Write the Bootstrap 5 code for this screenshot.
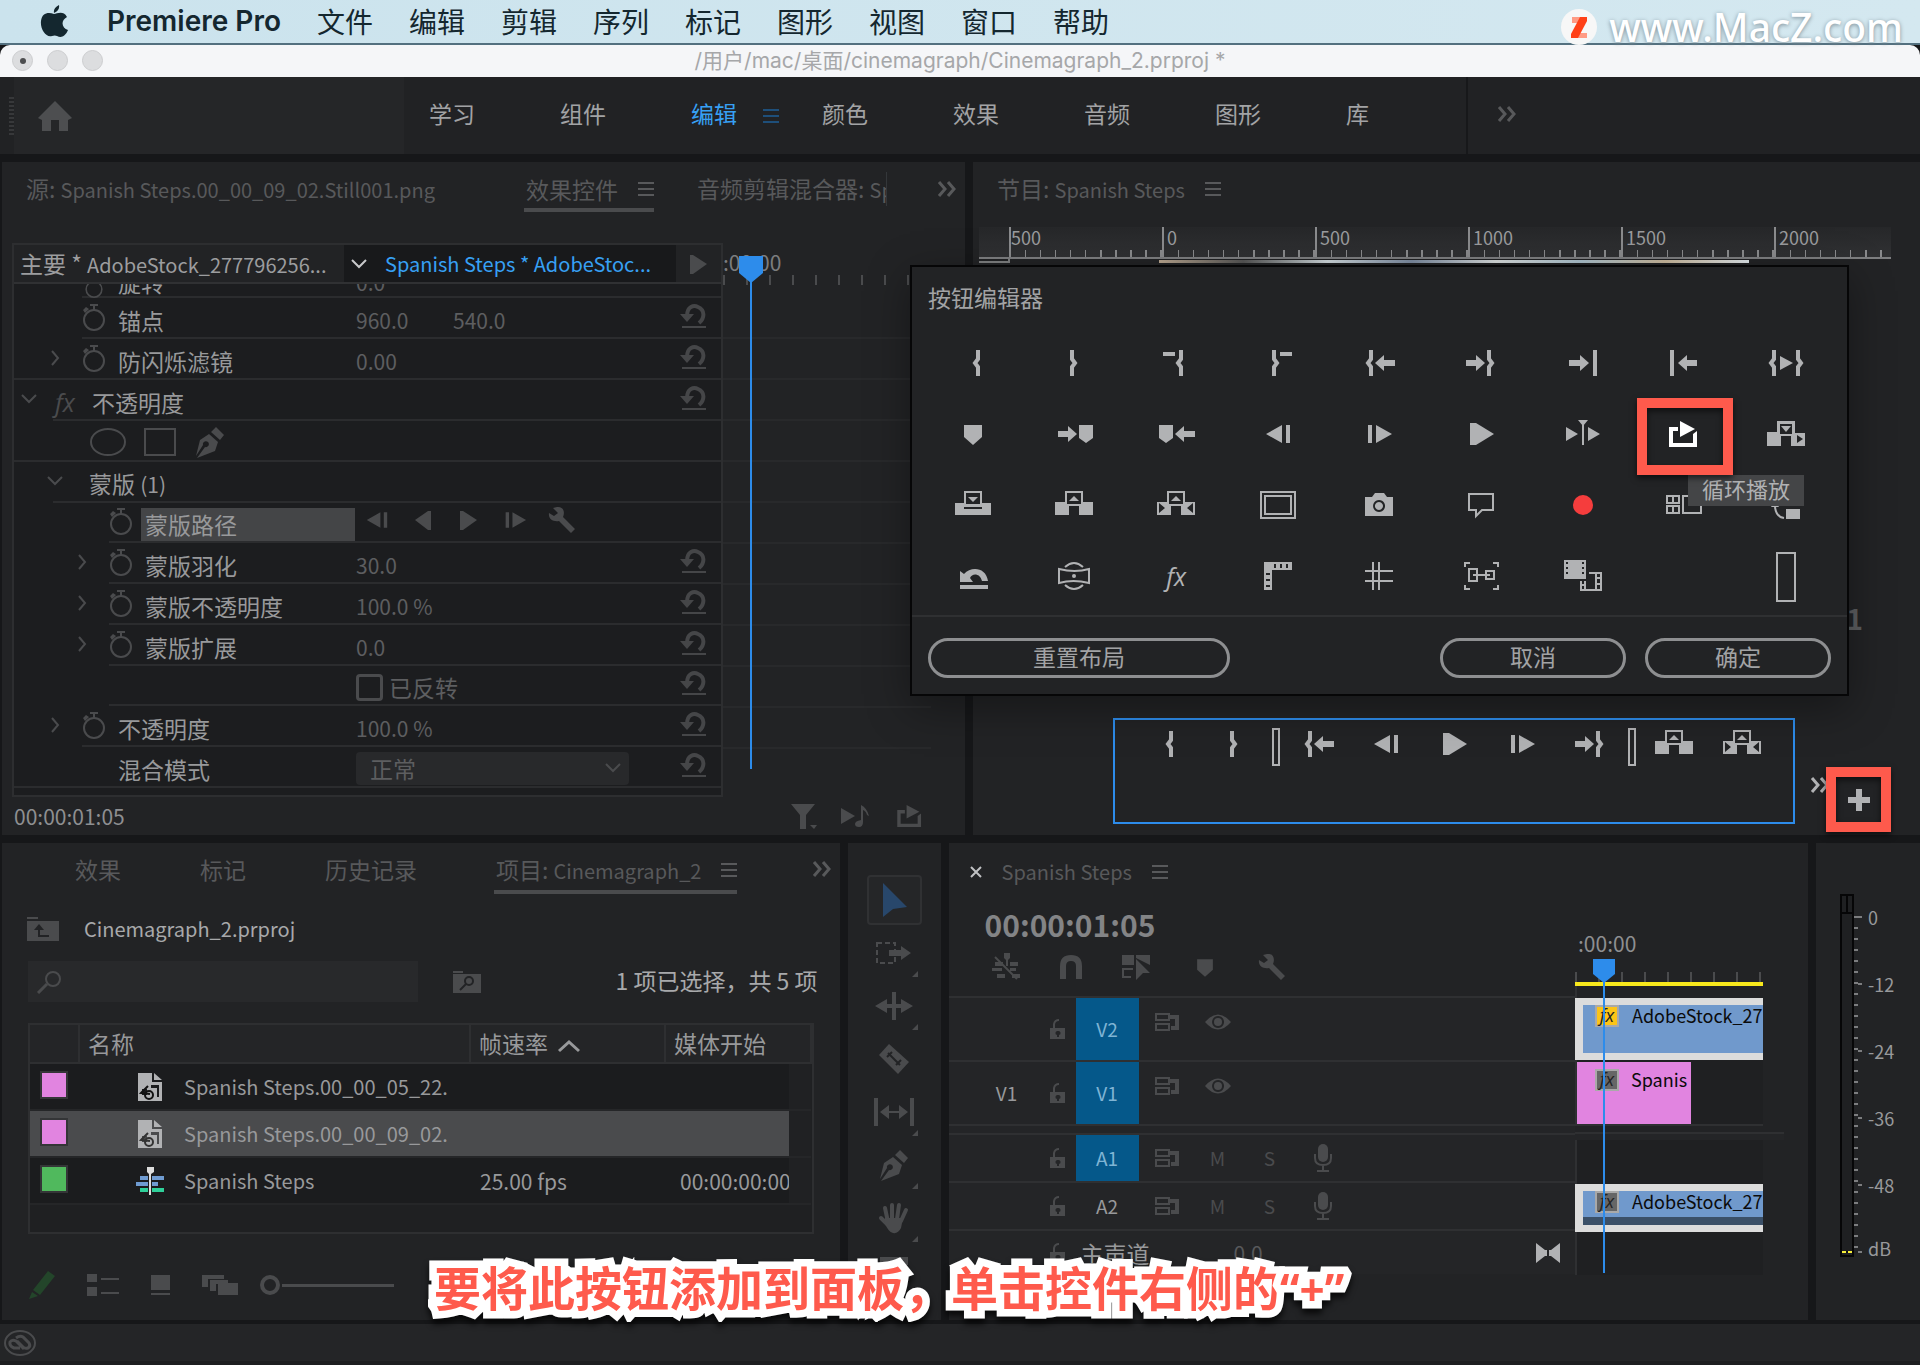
<!DOCTYPE html>
<html lang="zh-CN">
<head>
<meta charset="utf-8">
<meta name="viewport" content="width=device-width, initial-scale=1">
<title>Premiere Pro</title>
<link href="https://cdn.jsdelivr.net/npm/bootstrap@5.3.0/dist/css/bootstrap.min.css" rel="stylesheet">
<style>
:root{--panel:#222325;--gap:#161719;--line:#303133;--dim:#58595b;--mid:#8e8f91;--lit:#aaabad;--ico:#4a4b4d;--blue:#2d8ceb;--alert:#fe5a4c}
body{font-family:"Noto Sans CJK SC",sans-serif;font-size:23px;line-height:32px;background:var(--gap);color:var(--mid);min-height:100vh}
button{background:none;border:0;padding:0;color:inherit;line-height:inherit}
a{color:inherit;text-decoration:none}
svg{display:block;flex:none;fill:currentColor}
.ln{fill:none;stroke:currentColor}
.lat{font-size:20px}
.num{font-size:21px}
.ic{width:40px;height:32px}
.s28{width:28px;height:28px}
.burger{width:16px;height:16px}
.dbl{width:20px;height:20px}
.ic-dim{color:var(--ico)!important}
/* system bar */
.sysbar{height:45px;background:linear-gradient(90deg,#cbe3ed,#d4e8f0);border-bottom:2px solid #53707f;color:#14272f;font-size:28px;padding:0 17px 1px 39px}
.sysbar nav{gap:36px;padding-left:38px}
.appname{font-family:Inter,sans-serif;font-weight:600;font-size:28px}
.brandmark{color:#fff;font-family:"Noto Sans",sans-serif;font-size:39px;line-height:44px;font-weight:500;text-shadow:0 1px 4px #7a8b94;gap:12px;padding-top:12px;z-index:5}
.titlebar{height:32px;background:#f5f6f8;color:#a6a7a9;font-family:Inter,"Noto Sans CJK SC",sans-serif;font-size:21px;border-radius:10px 10px 0 0}
.lights{gap:14px;left:12px;top:5px}
.lights span{width:21px;height:21px;border-radius:50%;background:#dcdddf;border:1px solid #cccdcf}
/* workspace switcher */
.switcher{height:77px;background:#212224;color:#a2a3a5}
.grip{width:5px;height:38px;margin-left:9px;background:repeating-linear-gradient(#37383a 0 2px,transparent 2px 4px)}
.homebox{width:390px;height:77px;background:#252628;padding-left:23px;color:#4d4e50}
.spaces{gap:85px;padding:0 0 6px 25px}
.spaces .active{color:#37a0f4}
.spaces svg{left:72px;top:11px;color:#1e4f7a}
.moretabs{width:454px;border-left:2px solid #17181a;padding:0 0 4px 29px;color:var(--dim)}
/* panels */
.pane{background:var(--panel);min-width:0}
.upper,.lower{margin-top:8px}
.upper{height:673px;padding-left:2px;gap:8px}
.lower{padding-left:2px;gap:8px;min-height:477px}
.f-a{flex:963 1 0}.f-b{flex:947 1 0}.f-c{flex:838 1 0}.f-d{flex:860 1 0}
.tabline{color:var(--dim);height:57px;padding-bottom:4px;white-space:nowrap}
.tabline .on,.ptabs .on{border-bottom:4px solid var(--ico);padding:0 0 3px 2px;gap:20px}
/* effect list */
.fxlist{width:711px;margin-left:10px;border:2px solid #2d2e30;background:#1c1d1f;height:554px}
.fxhead{height:39px;background:#222325;border-bottom:2px solid #303133;color:#9c9d9f;white-space:nowrap}
.fxhead .clipname{width:332px;background:#18191b;color:#37a0f4;padding-left:7px;gap:18px}
.prow{height:41px;padding-top:2px;background:linear-gradient(#2b2c2e,#2b2c2e) no-repeat right bottom/100% 2px;color:#98999b}
.short{height:40px}
.cut{height:14px}
.i2{background-size:calc(100% - 39px) 2px}.i3{background-size:calc(100% - 68px) 2px}.i4{background-size:calc(100% - 95px) 2px}
.nm{width:342px;white-space:nowrap}
.pa{padding-left:7px}.pb{padding-left:33px}.pc{padding-left:60px}
.tw{width:34px;height:16px;color:var(--ico);margin-top:-6px}
.sw{width:37px;color:var(--ico);margin-top:-6px}
.val{color:#5d5e60;font-size:21px}
.reset{margin:-6px 14px 0 auto;color:#454648}
.fxword{font-family:"Open Sans",sans-serif;font-style:italic;font-size:25px}
.picked{background:#444547;height:33px;width:214px;padding-left:4px;margin-left:-4px}
.modesel{appearance:none;width:273px;height:33px;background:#28292b;border:0;border-radius:4px;color:#5d5e60;padding-left:14px;line-height:31px}
.tick{appearance:none;width:27px;height:27px;border:3px solid var(--ico);border-radius:4px;margin-right:6px;background:none}
.fxtime{color:#7c7d7f}
.fxticks{height:10px;margin:0 36px 0 0;background:repeating-linear-gradient(90deg,#4a4b4d 0 2px,transparent 2px 23px)}
.fxlines{height:490px;margin-right:34px;background:repeating-linear-gradient(transparent 0 39px,#28292b 39px 41px)}
.head-line{width:2px;background:var(--blue)}
.playhead{color:var(--blue);width:24px;height:28px}
/* program */
.scale{height:32px;background:linear-gradient(#262729,#303133);border-bottom:2px solid #7e7f81;margin:0 29px 0 6px;overflow:hidden;color:#9a9b9d;font-size:18px;line-height:21px}
.scale div{width:153px;flex:none;border-left:2px solid #8a8b8d;padding-left:3px;background:repeating-linear-gradient(90deg,transparent 0 9%,#8a8b8d 9% 10%) no-repeat left bottom/100% 7px}
.scale div:first-child{width:30px;border:0;background:none}
.scale div:nth-child(2){padding-left:0}
.corner{width:31px;height:4px;margin-left:6px;border:solid #7e7f81;border-width:0 2px 2px 0}
.strip{height:3px;width:590px;margin-left:149px;background:linear-gradient(90deg,#b9a690,#555,#cfd8dc,#7c8ba0,#d8dcdc,#aac0cc,#c8b79c,#dfe6ea)}
.editor{left:-63px;top:103px;width:939px;height:431px;background:#222325;border:2px solid #060607;box-shadow:0 12px 40px rgba(0,0,0,.35);z-index:10;color:#a2a3a5}
.editor h2{font-size:23px;line-height:32px;margin:14px 0 34px 16px;font-weight:400}
.btnset{grid-template-columns:repeat(9,1fr);grid-auto-rows:71px;padding:0 10px;color:#b1b2b4;height:297px}
.btnset button{display:flex;align-items:flex-start;justify-content:center;height:32px}
.acts{border-top:2px solid #2f3032;padding:21px 16px 0;gap:19px;margin-top:-29px}
.pill{border:3px solid #8e8f91;border-radius:20px;height:40px;width:186px;line-height:28px;padding-bottom:4px;color:#a2a3a5}
.wide{width:302px}
.callout{border:10px solid var(--alert);box-shadow:0 3px 6px rgba(0,0,0,.6),inset 0 3px 6px rgba(0,0,0,.6)}
.co1{left:725px;top:131px;width:96px;height:77px}
.hint{left:776px;top:208px;width:116px;height:31px;background:#444547;color:#b0b1b3;font-size:22px;line-height:27px;text-align:center}
.transport{left:140px;right:125px;top:556px;height:106px;border:2px solid var(--blue);padding:8px 0 0 31px;gap:18px;color:#b1b2b4}
.transport div{gap:28px}
.slot{width:8px;height:38px;border:2px solid currentColor;flex:none}
.co2{right:29px;top:605px;width:65px;height:65px;color:#b1b2b4}
/* project */
.ptabs{height:59px;padding-bottom:7px;color:var(--dim);white-space:nowrap}
.finder{width:390px;height:41px;background:#28292b}
.finder input{background:none;border:0;color:var(--lit);width:330px}
.bin{width:786px;height:211px;margin-left:26px;border:2px solid #2e2f31;overflow:hidden;background:#1f2022}
.bin table{table-layout:fixed;width:100%;border-collapse:collapse;color:#98999b}
.bin th{height:38px;font-weight:400;line-height:30px;background:#242527;border-right:2px solid #2e2f31;border-bottom:2px solid #2e2f31;padding:0 0 2px 8px}
.bin td{height:47px;padding:0;white-space:nowrap;overflow:hidden;background:#1b1c1e;border-bottom:2px solid #252628}
.bin .sel td{background:#4a4b4d}
.bin tr td:last-child{background:#202123}
.chip{width:28px;height:28px;border:2px solid #343537;margin-left:10px;margin-top:-4px}
.rose{background:#e184e0}.leaf{background:#50b95d}
.foot{height:80px;color:var(--ico);padding-left:26px}
.zoomer{appearance:none;width:134px;height:20px;background:linear-gradient(var(--ico),var(--ico)) no-repeat right center/112px 3px;margin-left:22px}
.zoomer::-webkit-slider-thumb{appearance:none;width:20px;height:20px;border:4px solid var(--ico);border-radius:50%;background:var(--panel)}
/* tools */
.tools{width:93px;flex:none;padding-top:32px;color:var(--ico)}
.tools button{width:55px;height:50px;margin-bottom:3px;display:flex;align-items:center;justify-content:center;position:relative}
.tools .on{border:2px solid #303133;border-radius:4px;background:#252628;color:#28476b}
.tools .more::after{content:"";position:absolute;right:4px;bottom:1px;border:3px solid;border-color:transparent currentColor currentColor transparent}
/* sequence */
.tcode{font-size:30px;font-weight:700;line-height:36px;color:#838486;margin-left:36px;padding:5px 0 7px}
.track{border-top:2px solid #2f3032;background:#242527;color:#98999b;font-size:19px}
.t64{height:64px}.t48{height:48px}
.src{width:100px;text-align:center;padding-left:16px}
.lock{width:27px}
.tg{width:63px;align-self:stretch}
.tg.on{background:#05588a;color:#7fb4d4}
.opts{color:var(--ico);padding-left:14px}
.opts button{width:52px}
.hi{padding-bottom:14px}
.lane{width:188px;background:#1f2022;border-left:2px solid #2f3032}
.clip{color:#0b0b0b;font-size:18px;line-height:20px;white-space:nowrap;overflow:hidden;gap:12px}
.clip.white{background:#dcdcdc;padding:7px 0 7px 8px}
.clip.white div{background:#7099cc;padding-left:12px;gap:13px}
.badge-fx{width:24px;height:22px;border:2px solid #a9a9a9;background:#666;font:italic 18px/16px "Open Sans",sans-serif;text-align:center;color:#222;flex:none}
.yel{background:#fcc417}
/* meter */
.meter{width:104px;flex:none;padding:51px 0 0 24px;color:#98999b;font-size:18px}
.bar{width:14px;height:363px;border:2px solid #060607;background:#1f2022}
.bar i{display:block;height:18px;border-bottom:2px solid #060607;background:linear-gradient(90deg,transparent 4px,#060607 4px 6px,transparent 6px)}
.bar b{display:block;height:2px;margin-top:337px;background:linear-gradient(90deg,#f6ee3a 4px,#111 4px 6px,#f6ee3a 6px)}
.mt{padding-top:12px}
.mt span{display:block;height:67px;line-height:22px;padding-left:10px;background:linear-gradient(#7c7d7f,#7c7d7f) no-repeat 0 10px/4px 2px}
.mt span:last-child{line-height:14px}
.mtk{width:4px;margin-top:22px;height:338px;background:repeating-linear-gradient(#7c7d7f 0 2px,transparent 2px 11px)}
.status{height:41px;margin-top:4px;background:#242527;border-bottom:4px solid #1d1e20;padding-left:4px;color:var(--ico)}
.caption{left:434px;top:1253px;font-size:47px;line-height:66px;font-weight:700;white-space:nowrap;z-index:20;margin:0;color:var(--alert);-webkit-text-stroke:15px #fff;paint-order:stroke fill;stroke-linejoin:round;filter:drop-shadow(0 5px 3px rgba(0,0,0,.75))}
.caption span{font-family:"Noto Sans",sans-serif;font-size:44px}
</style>
<script src="https://cdn.jsdelivr.net/npm/bootstrap@5.3.0/dist/js/bootstrap.bundle.min.js"></script>
</head>
<body class="d-flex flex-column position-relative">
<svg width="0" height="0" class="position-absolute" aria-hidden="true">
<symbol id="burger" viewBox="0 0 16 16"><path d="M0 1h16v2H0zM0 7h16v2H0zM0 13h16v2H0z"/></symbol>
<symbol id="dbl" viewBox="0 0 20 20"><path class="ln" stroke-width="3" d="M2 3l6 7-6 7M11 3l6 7-6 7"/></symbol>
<symbol id="right" viewBox="0 0 16 16"><path class="ln" stroke-width="2" d="M5 1l6 7-6 7"/></symbol>
<symbol id="down" viewBox="0 0 16 16"><path class="ln" stroke-width="2" d="M1 4l7 7 7-7"/></symbol>
<symbol id="watch" viewBox="0 0 26 28"><circle class="ln" stroke-width="2" cx="13" cy="17" r="10"/><path d="M9 1h8v2h-3v4h-2V3H9zM2 7l3-3 3 2-4 4z"/></symbol>
<symbol id="reset" viewBox="0 0 28 28"><path class="ln" stroke-width="4" d="M8 13C8 3 15 2 19 4C26 7 26 15 20 20"/><path d="M1 11h14l-7 8zM3 23h24v2H3z"/></symbol>
<symbol id="pen" viewBox="0 0 32 32"><path d="M22 1l8 8-4 5-9-8zM15 8l9 8-3 9-18 7 8-11a3 3 0 1 0-2-2L2 30 6 14z"/></symbol>
<symbol id="wrench" viewBox="0 0 28 28"><path d="M5 2L9 1C16 0 17 7 15 11L27 23 23 27 11 15C5 16 0 13 1 7L6 10 10 7z"/></symbol>
<symbol id="in" viewBox="0 0 40 32"><path class="ln" stroke-width="4" d="M25 3V12L22 16L25 20V29"/></symbol>
<symbol id="out" viewBox="0 0 40 32"><path class="ln" stroke-width="4" d="M18 3V12L21 16L18 20V29"/></symbol>
<symbol id="vin" viewBox="0 0 40 32"><path class="ln" stroke-width="4" d="M25 3V12L22 16L25 20V29M7 7H19"/></symbol>
<symbol id="vout" viewBox="0 0 40 32"><path class="ln" stroke-width="4" d="M16 3V12L19 16L16 20V29M22 7H34"/></symbol>
<symbol id="goin" viewBox="0 0 40 32"><path class="ln" stroke-width="4" d="M12 3V12L9 16L12 20V29"/><path d="M16 16l9-8v5h11v6H25v5z"/></symbol>
<symbol id="goout" viewBox="0 0 40 32"><path class="ln" stroke-width="4" d="M28 3V12L31 16L28 20V29"/><path d="M24 16l-9-8v5H5v6h10v5z"/></symbol>
<symbol id="nexted" viewBox="0 0 40 32"><path d="M26 16l-9-8v5H6v6h11v5zM30 3h4v26h-4z"/></symbol>
<symbol id="preved" viewBox="0 0 40 32"><path d="M14 16l9-8v5h10v6H23v5zM6 3h4v26H6z"/></symbol>
<symbol id="inout" viewBox="0 0 40 32"><path class="ln" stroke-width="4" d="M8 3V12L5 16L8 20V29M32 3V12L35 16L32 20V29"/><path d="M14 9l13 7-13 7z"/></symbol>
<symbol id="mark" viewBox="0 0 40 32"><path d="M11 7H29V19L20 27L11 19Z"/></symbol>
<symbol id="nextmk" viewBox="0 0 40 32"><path d="M23 16l-9-8v5H4v6h10v5zM25 7h14v13l-7 5-7-5z"/></symbol>
<symbol id="prevmk" viewBox="0 0 40 32"><path d="M19 16l9-8v5h11v6H28v5zM3 7h14v13l-7 5-7-5z"/></symbol>
<symbol id="back" viewBox="0 0 40 32"><path d="M24 7v18L8 16zM28 7h4v18h-4z"/></symbol>
<symbol id="fwd" viewBox="0 0 40 32"><path d="M17 7v18l16-9zM9 7h4v18H9z"/></symbol>
<symbol id="play" viewBox="0 0 40 32"><path d="M9 5H15L33 16L15 27H9Z"/></symbol>
<symbol id="around" viewBox="0 0 40 32"><path d="M3 9l12 7-12 7zM25 9l12 7-12 7zM19 4h2v23h-2zM15 2h10l-5 6z"/></symbol>
<symbol id="loop" viewBox="0 0 40 32"><path d="M16 3l15 8-15 8zM5 9h9v4H9v12h20v-9l4-3v16H5z"/></symbol>
<symbol id="insert" viewBox="0 0 40 32"><path fill-rule="evenodd" d="M11 3h18v12h10v13H25V18H15v10H1V14h10zM14 6v10h12V6zM31 17v8l6-4z"/><path d="M15 8h10l-5 6z"/></symbol>
<symbol id="over" viewBox="0 0 40 32"><path fill-rule="evenodd" d="M11 2h18v12h9v12H2V14h9zM13 4v11h14V4zM11 18v2h18v-2z"/><path d="M15 8h10l-5 5z"/></symbol>
<symbol id="lift" viewBox="0 0 40 32"><path fill-rule="evenodd" d="M11 2h18v11h10v13H25V17H15v9H1V13h10zM13 4v11h14V4z"/><path d="M15 12h10l-5-5z"/></symbol>
<symbol id="extract" viewBox="0 0 40 32"><path fill-rule="evenodd" d="M11 2h18v11h10v13H25V17H15v9H1V13h10zM13 4v11h14V4zM3 14v10l6-5zM37 14v10l-6-5z"/><path d="M15 12h10l-5-5z"/></symbol>
<symbol id="safe" viewBox="0 0 40 32"><path class="ln" stroke-width="2" d="M3 3h34v26H3zM7 7h26v18H7z"/></symbol>
<symbol id="cam" viewBox="0 0 40 32"><path fill-rule="evenodd" d="M6 8h7l3-4h9l3 4h6v19H6zM20 11a6 6 0 1 0 .1 0zM20 13a4 4 0 1 1-.1 0z"/></symbol>
<symbol id="note" viewBox="0 0 40 32"><path class="ln" stroke-width="2" d="M8 5h24v16H21l-6 6v-6H8z"/></symbol>
<symbol id="rec" viewBox="0 0 40 32"><circle cx="20" cy="16" r="10" fill="#f53d3d"/></symbol>
<symbol id="multi" viewBox="0 0 40 32"><path class="ln" stroke-width="2" d="M3 7h12v7H3zM9 7v7M3 17h12v7H3zM9 17v7M19 7h18v17H19z"/></symbol>
<symbol id="proxy" viewBox="0 0 40 32"><path d="M9 12l4 6H5zM20 20h14v10H20z"/><path class="ln" stroke-width="2" d="M9 16c0 8 3 12 9 13"/></symbol>
<symbol id="undo" viewBox="0 0 40 32"><path d="M7 11l4 3c7-8 22-7 24 7h-6c-2-8-10-8-12-3l3 4H7zM7 25h28v4H7z"/></symbol>
<symbol id="vr" viewBox="0 0 40 32"><path class="ln" stroke-width="2" d="M5 9q16 4 30 0v14q-16-4-30 0zM11 7q9-8 18 0M11 25q9 8 18 0"/><circle cx="20" cy="16" r="2"/></symbol>
<symbol id="rule" viewBox="0 0 40 32"><path fill-rule="evenodd" d="M6 2h28v8H14v20H6zM16 4v4h2V4zM22 4v4h2V4zM28 4v4h2V4zM8 13v2h4v-2zM8 19v2h4v-2zM8 25v2h4v-2z"/></symbol>
<symbol id="guide" viewBox="0 0 40 32"><path class="ln" stroke-width="2" d="M6 11h28M6 21h28M14 2v28M20 2v28"/></symbol>
<symbol id="snap" viewBox="0 0 40 32"><path class="ln" stroke-width="2" d="M4 7V3h5M32 3h5v4M4 25v4h5M32 29h5v-4M8 9h8v12H8zM25 11h8v8h-8zM12 15h17"/></symbol>
<symbol id="film" viewBox="0 0 40 32"><path fill-rule="evenodd" d="M1 0h22v19H1zM3 2v2h2V2zM3 7v2h2V7zM3 12v2h2v-2zM19 2v2h2V2zM19 7v2h2V7zM19 12v2h2v-2z"/><path class="ln" stroke-width="2" d="M26 13h12v17H18v-9M33 13v17M33 18h5M33 24h5M22 21v9M18 25h4"/></symbol>
<symbol id="pback" viewBox="0 0 28 28"><path d="M21 5v19h-3L5 14 18 5z"/></symbol>
<symbol id="pfwd" viewBox="0 0 28 28"><path d="M6 5v19h3L23 14 9 5z"/></symbol>
<symbol id="lockic" viewBox="0 0 18 22"><path fill-rule="evenodd" d="M1 10h3V6q1-5 6-5v2q-4 0-4 4v3h10v11H1zM9 13a2 2 0 0 0-1 4v2h2v-2a2 2 0 0 0-1-4z"/></symbol>
<symbol id="sync" viewBox="0 0 28 20"><path class="ln" stroke-width="2" d="M3 2h13v6H3zM3 12h13v6H3z"/><path d="M17 3h9v15h-8v-4h4V7h-5z"/></symbol>
<symbol id="eye" viewBox="0 0 28 20"><path fill-rule="evenodd" d="M1 10Q14-5 27 10Q14 25 1 10zM14 4a6 6 0 1 0 .1 0z"/><circle cx="14" cy="10" r="4"/></symbol>
<symbol id="mic" viewBox="0 0 20 30"><rect x="5" y="1" width="10" height="18" rx="5"/><path class="ln" stroke-width="2" d="M2 11v4q0 7 8 7t8-7v-4M10 22v6M4 28h12"/></symbol>
</svg>

<header class="sysbar d-flex align-items-center position-relative">
  <svg width="30" height="32" viewBox="0 0 30 32"><path d="M20 0q1 5-5 8Q14 3 20 0zM15 9c3 0 9-4 13 3-7 4-5 11 1 13-3 7-7 8-11 6q-2-1-5 0C7 33 1 24 2 16S9 7 15 9z"/></svg>
  <nav class="d-flex align-items-center" aria-label="菜单">
    <a href="#" class="appname">Premiere Pro</a><a href="#">文件</a><a href="#">编辑</a><a href="#">剪辑</a><a href="#">序列</a><a href="#">标记</a><a href="#">图形</a><a href="#">视图</a><a href="#">窗口</a><a href="#">帮助</a>
  </nav>
  <div class="brandmark d-flex align-items-center ms-auto position-relative"><svg width="36" height="36" viewBox="0 0 36 36"><circle cx="18" cy="18" r="18" fill="#f7f7f7"/><path fill="#ff9b85" d="M11 8h14v6H11zM11 24h15v5H11z"/><path fill="#ff4017" d="M19 8h7v4L17 29h-7v-4z"/></svg><span>www.MacZ.com</span></div>
</header>
<div class="titlebar d-flex align-items-center justify-content-center position-relative">
  <div class="lights d-flex position-absolute"><span class="d-flex align-items-center justify-content-center"><svg width="6" height="6"><circle cx="3" cy="3" r="3" fill="#4d4e50"/></svg></span><span></span><span></span></div>
  <span>/用户/mac/桌面/cinemagraph/Cinemagraph_2.prproj *</span>
</div>
<nav class="switcher d-flex align-items-center" aria-label="工作区">
  <div class="grip"></div>
  <div class="homebox d-flex align-items-center"><a href="#" aria-label="主页"><svg width="36" height="32" viewBox="0 0 36 32"><path d="M18 1L35 18l-4 2v11h-9V20h-8v11H5V20l-4-2z"/></svg></a></div>
  <div class="spaces d-flex"><a href="#">学习</a><a href="#">组件</a><a href="#" class="active position-relative">编辑<svg class="burger position-absolute"><use href="#burger"/></svg></a><a href="#">颜色</a><a href="#">效果</a><a href="#">音频</a><a href="#">图形</a><a href="#">库</a></div>
  <div class="moretabs ms-auto align-self-stretch d-flex align-items-center"><svg class="dbl"><use href="#dbl"/></svg></div>
</nav>

<main class="flex-grow-1 d-flex flex-column">
<div class="upper d-flex">
  <section class="pane f-a">
    <div class="tabline d-flex align-items-center pe-2" style="padding-left:24px">
      <a href="#" style="width:498px">源: <span class="lat">Spanish Steps.00_00_09_02.Still001.png</span></a>
      <a href="#" class="on d-flex align-items-center mt-2">效果控件<svg class="burger"><use href="#burger"/></svg></a>
      <a href="#" class="overflow-hidden border-end border-secondary border-opacity-25" style="width:190px;margin-left:43px">音频剪辑混合器: <span class="lat">Sp</span></a>
      <svg class="dbl ms-auto"><use href="#dbl"/></svg>
    </div>
    <div class="d-flex position-relative" style="margin-top:24px">
      <div class="fxlist flex-shrink-0">
        <div class="fxhead d-flex align-items-center"><span style="width:330px;padding-left:6px">主要 * <span class="lat">AdobeStock_277796256...</span></span><div class="clipname d-flex align-items-center align-self-stretch"><svg width="16" height="16" style="color:#c8c9cb"><use href="#down"/></svg><span class="lat">Spanish Steps * AdobeStoc...</span></div><svg class="s28 ic-dim ms-2"><use href="#pfwd"/></svg></div>
        <div class="prow cut i3 d-flex align-items-end overflow-hidden pt-0"><div class="nm pb d-flex align-items-end"><span class="tw"></span><span class="sw"><svg width="26" height="22" viewBox="0 0 26 28"><use href="#watch"/></svg></span><span>旋转</span></div><span class="val">0.0</span></div>
        <div class="prow i3 d-flex align-items-center"><div class="nm pb d-flex align-items-center"><span class="tw"></span><span class="sw"><svg width="26" height="28"><use href="#watch"/></svg></span>锚点</div><span class="val" style="width:97px">960.0</span><span class="val">540.0</span><button class="reset" aria-label="重置"><svg class="s28"><use href="#reset"/></svg></button></div>
        <div class="prow d-flex align-items-center"><div class="nm pb d-flex align-items-center"><span class="tw"><svg width="16" height="16"><use href="#right"/></svg></span><span class="sw"><svg width="26" height="28"><use href="#watch"/></svg></span>防闪烁滤镜</div><span class="val">0.00</span><button class="reset" aria-label="重置"><svg class="s28"><use href="#reset"/></svg></button></div>
        <div class="prow i2 d-flex align-items-center"><div class="nm pa d-flex align-items-center"><span class="tw"><svg width="16" height="16"><use href="#down"/></svg></span><span class="sw fxword mt-0">fx</span>不透明度</div><button class="reset" aria-label="重置"><svg class="s28"><use href="#reset"/></svg></button></div>
        <div class="prow d-flex align-items-center ic-dim pt-0" style="padding-left:76px;gap:18px"><svg width="36" height="28"><ellipse class="ln" stroke-width="2" cx="18" cy="14" rx="17" ry="13"/></svg><svg width="32" height="28"><path class="ln" stroke-width="2" d="M1 1h30v26H1z"/></svg><svg width="32" height="32"><use href="#pen"/></svg></div>
        <div class="prow i2 d-flex align-items-center"><div class="nm pb d-flex align-items-center"><span class="tw"><svg width="16" height="16"><use href="#down"/></svg></span><span class="ps-2">蒙版 <span class="num">(1)</span></span></div></div>
        <div class="prow short i4 d-flex align-items-center"><div class="nm pc d-flex align-items-center"><span class="tw"></span><span class="sw"><svg width="26" height="28"><use href="#watch"/></svg></span><span class="picked">蒙版路径</span></div><div class="d-flex align-items-center ic-dim ps-1" style="gap:16px;margin-top:-8px"><svg width="34" height="28" viewBox="0 0 40 32"><use href="#back"/></svg><svg class="s28"><use href="#pback"/></svg><svg class="s28"><use href="#pfwd"/></svg><svg width="34" height="28" viewBox="0 0 40 32"><use href="#fwd"/></svg><svg class="s28"><use href="#wrench"/></svg></div></div>
        <div class="prow i4 d-flex align-items-center"><div class="nm pc d-flex align-items-center"><span class="tw"><svg width="16" height="16"><use href="#right"/></svg></span><span class="sw"><svg width="26" height="28"><use href="#watch"/></svg></span>蒙版羽化</div><span class="val">30.0</span><button class="reset" aria-label="重置"><svg class="s28"><use href="#reset"/></svg></button></div>
        <div class="prow i4 d-flex align-items-center"><div class="nm pc d-flex align-items-center"><span class="tw"><svg width="16" height="16"><use href="#right"/></svg></span><span class="sw"><svg width="26" height="28"><use href="#watch"/></svg></span>蒙版不透明度</div><span class="val">100.0 %</span><button class="reset" aria-label="重置"><svg class="s28"><use href="#reset"/></svg></button></div>
        <div class="prow i4 d-flex align-items-center"><div class="nm pc d-flex align-items-center"><span class="tw"><svg width="16" height="16"><use href="#right"/></svg></span><span class="sw"><svg width="26" height="28"><use href="#watch"/></svg></span>蒙版扩展</div><span class="val">0.0</span><button class="reset" aria-label="重置"><svg class="s28"><use href="#reset"/></svg></button></div>
        <div class="prow short i4 d-flex align-items-center"><div class="nm"></div><input class="tick" type="checkbox" id="inv"><label for="inv" class="val" style="font-size:23px">已反转</label><button class="reset" aria-label="重置"><svg class="s28"><use href="#reset"/></svg></button></div>
        <div class="prow i3 d-flex align-items-center"><div class="nm pb d-flex align-items-center"><span class="tw"><svg width="16" height="16"><use href="#right"/></svg></span><span class="sw"><svg width="26" height="28"><use href="#watch"/></svg></span>不透明度</div><span class="val">100.0 %</span><button class="reset" aria-label="重置"><svg class="s28"><use href="#reset"/></svg></button></div>
        <div class="prow d-flex align-items-center"><div class="nm pb d-flex align-items-center"><span class="tw"></span><span class="sw"></span><label for="blend">混合模式</label></div><div class="position-relative"><select id="blend" class="modesel d-block"><option>正常</option></select><svg class="position-absolute end-0 top-0 mt-2 me-2 ic-dim" width="16" height="16"><use href="#down"/></svg></div><button class="reset" aria-label="重置"><svg class="s28"><use href="#reset"/></svg></button></div>
      </div>
      <div class="fxtime flex-grow-1 position-relative">
        <div class="num" style="height:32px;padding-top:3px">:00:00</div>
        <div class="fxticks"></div>
        <div class="fxlines" style="margin-top:13px"></div>
        <svg class="playhead position-absolute" style="left:16px;top:13px" viewBox="0 0 24 28"><path d="M0 0h24v17L12 27 0 17z"/></svg>
        <div class="head-line position-absolute" style="left:27px;top:36px;height:490px"></div>
      </div>
    </div>
    <div class="d-flex align-items-center" style="height:40px;padding:0 38px 2px 12px;gap:23px"><span class="me-auto num">00:00:01:05</span>
      <svg class="s28 ic-dim"><path d="M2 2h24L17 13v14h-6V13zM21 23h7l-3 4z"/></svg><svg width="30" height="28" class="ic-dim"><path d="M1 6l14 8-14 8zM21 3q6 3 8 11l-2-1q-1-4-4-5v12q0 5-4 5t-4-3 6-4z"/></svg><svg width="34" height="28" viewBox="0 0 40 32" class="ic-dim"><use href="#loop"/></svg></div>
  </section>
  <section class="pane f-b position-relative">
    <div class="tabline d-flex align-items-center" style="padding-left:24px;gap:20px"><span>节目: <span class="lat">Spanish Steps</span></span><svg class="burger"><use href="#burger"/></svg></div>
    <div class="scale d-flex" style="margin-top:8px"><div></div><div>500</div><div>0</div><div>500</div><div>1000</div><div>1500</div><div>2000</div></div>
    <div class="d-flex align-items-end"><div class="corner"></div><div class="strip"></div></div>
    <b class="position-absolute" style="right:57px;top:440px;font-size:28px;color:#5d5e60">1</b>
    <div class="transport position-absolute d-flex align-items-start">
      <div class="d-flex"><button aria-label="标记入点"><svg class="ic"><use href="#in"/></svg></button><button aria-label="标记出点"><svg class="ic"><use href="#out"/></svg></button></div>
      <span class="slot"></span>
      <div class="d-flex"><button aria-label="转到入点"><svg class="ic"><use href="#goin"/></svg></button><button aria-label="后退一帧"><svg class="ic"><use href="#back"/></svg></button><button aria-label="播放"><svg class="ic"><use href="#play"/></svg></button><button aria-label="前进一帧"><svg class="ic"><use href="#fwd"/></svg></button><button aria-label="转到出点"><svg class="ic"><use href="#goout"/></svg></button></div>
      <span class="slot"></span>
      <div class="d-flex"><button aria-label="提升"><svg class="ic"><use href="#lift"/></svg></button><button aria-label="提取"><svg class="ic"><use href="#extract"/></svg></button></div>
    </div>
    <svg class="dbl position-absolute" style="right:90px;top:613px;color:#b1b2b4"><use href="#dbl"/></svg>
    <button class="callout co2 position-absolute d-flex align-items-center justify-content-center" aria-label="按钮编辑器"><svg width="22" height="22"><path d="M8 0h6v8h8v6h-8v8H8v-8H0V8h8z"/></svg></button>
    <div class="editor position-absolute" role="dialog" aria-labelledby="edt">
      <h2 id="edt">按钮编辑器</h2>
      <div class="btnset d-grid">
        <button aria-label="标记入点"><svg class="ic"><use href="#in"/></svg></button><button aria-label="标记出点"><svg class="ic"><use href="#out"/></svg></button><button aria-label="标记视频入点"><svg class="ic"><use href="#vin"/></svg></button><button aria-label="标记视频出点"><svg class="ic"><use href="#vout"/></svg></button><button aria-label="转到入点"><svg class="ic"><use href="#goin"/></svg></button><button aria-label="转到出点"><svg class="ic"><use href="#goout"/></svg></button><button aria-label="转到下一个编辑点"><svg class="ic"><use href="#nexted"/></svg></button><button aria-label="转到上一个编辑点"><svg class="ic"><use href="#preved"/></svg></button><button aria-label="从入点到出点播放"><svg class="ic"><use href="#inout"/></svg></button>
        <button aria-label="添加标记"><svg class="ic"><use href="#mark"/></svg></button><button aria-label="下一个标记"><svg class="ic"><use href="#nextmk"/></svg></button><button aria-label="上一个标记"><svg class="ic"><use href="#prevmk"/></svg></button><button aria-label="后退一帧"><svg class="ic"><use href="#back"/></svg></button><button aria-label="前进一帧"><svg class="ic"><use href="#fwd"/></svg></button><button aria-label="播放"><svg class="ic"><use href="#play"/></svg></button><button aria-label="播放邻近区域"><svg class="ic"><use href="#around"/></svg></button><button class="text-white" aria-label="循环播放"><svg class="ic"><use href="#loop"/></svg></button><button aria-label="插入"><svg class="ic"><use href="#insert"/></svg></button>
        <button aria-label="覆盖"><svg class="ic"><use href="#over"/></svg></button><button aria-label="提升"><svg class="ic"><use href="#lift"/></svg></button><button aria-label="提取"><svg class="ic"><use href="#extract"/></svg></button><button aria-label="安全边距"><svg class="ic"><use href="#safe"/></svg></button><button aria-label="导出帧"><svg class="ic"><use href="#cam"/></svg></button><button aria-label="注释"><svg class="ic"><use href="#note"/></svg></button><button aria-label="录制"><svg class="ic"><use href="#rec"/></svg></button><button aria-label="多机位"><svg class="ic"><use href="#multi"/></svg></button><button aria-label="切换代理"><svg class="ic"><use href="#proxy"/></svg></button>
        <button aria-label="还原"><svg class="ic"><use href="#undo"/></svg></button><button aria-label="VR 视频"><svg class="ic"><use href="#vr"/></svg></button><button class="fxword" aria-label="全局 FX">fx</button><button aria-label="标尺"><svg class="ic"><use href="#rule"/></svg></button><button aria-label="参考线"><svg class="ic"><use href="#guide"/></svg></button><button aria-label="对齐"><svg class="ic"><use href="#snap"/></svg></button><button aria-label="比较视图"><svg class="ic"><use href="#film"/></svg></button><span></span><button aria-label="空格"><svg width="20" height="50" style="margin-top:-8px"><path class="ln" stroke-width="2" d="M1 1h18v48H1z"/></svg></button>
      </div>
      <div class="acts d-flex"><button class="pill wide me-auto">重置布局</button><button class="pill">取消</button><button class="pill">确定</button></div>
      <div class="hint position-absolute" role="tooltip">循环播放</div>
      <div class="callout co1 position-absolute"></div>
    </div>
  </section>
</div>

<div class="lower d-flex flex-grow-1">
  <section class="pane f-c">
    <div class="ptabs d-flex align-items-center" style="padding-left:73px"><a href="#" style="width:125px">效果</a><a href="#" style="width:125px">标记</a><a href="#" style="width:169px">历史记录</a><a href="#" class="on d-flex align-items-center mt-2"><span>项目: <span class="lat">Cinemagraph_2</span></span><svg class="burger"><use href="#burger"/></svg></a><svg class="dbl ms-auto me-2"><use href="#dbl"/></svg></div>
    <div class="d-flex align-items-center" style="height:59px;padding:0 0 5px 25px;gap:25px;color:#a8a9ab"><svg width="32" height="24" class="ic-dim"><path d="M0 0h11v2H0zM0 4h32v20H0z"/><path fill="none" stroke="#222325" stroke-width="2" d="M12 10v9h10"/><path fill="#222325" d="M7 13l5-6 5 6z"/></svg><span class="lat">Cinemagraph_2.prproj</span></div>
    <div class="d-flex align-items-center" style="padding:0 22px 0 26px;color:#a8a9ab"><div class="finder d-flex align-items-center"><svg width="26" height="24" class="ic-dim ms-2 me-3"><circle class="ln" stroke-width="2" cx="17" cy="9" r="7"/><path class="ln" stroke-width="3" d="M11 14l-9 9"/></svg><input type="search" aria-label="搜索"></div><svg width="28" height="22" class="ic-dim" style="margin-left:35px"><path d="M0 0h10v2H0zM0 3h28v19H0z"/><circle cx="16" cy="10" r="4" fill="none" stroke="#222325" stroke-width="2"/><path stroke="#222325" stroke-width="2" d="M13 13l-6 6"/></svg><span class="ms-auto pb-1">1 项已选择，共 5 项</span></div>
    <div class="bin" style="margin-top:21px"><table>
      <colgroup><col style="width:49px"><col style="width:391px"><col style="width:195px"><col style="width:124px"><col></colgroup>
      <thead><tr><th></th><th>名称</th><th>帧速率 <svg class="d-inline-block ms-1" width="24" height="14"><path class="ln" stroke="#c8c9cb" stroke-width="3" d="M2 12L12 3l10 9"/></svg></th><th colspan="2">媒体开始</th></tr></thead>
      <tbody>
      <tr><td><div class="chip rose"></div></td><td><div class="d-flex align-items-center lat" style="padding-left:59px;gap:22px"><svg width="24" height="28"><path fill="#b1b2b4" fill-rule="evenodd" d="M0 0h14v9h10v19H0zM16 0l8 7h-8zM4 16v6h5v-6zM13 12v3h6v9h2V12z"/><path fill="none" stroke="#111" stroke-width="2" d="M10 13l-7 7 9 1"/><circle cx="11" cy="22" r="4" fill="none" stroke="#111" stroke-width="2"/></svg>Spanish Steps.00_00_05_22.</div></td><td></td><td></td><td></td></tr>
      <tr class="sel"><td><div class="chip rose"></div></td><td><div class="d-flex align-items-center lat" style="padding-left:59px;gap:22px"><svg width="24" height="28"><path fill="#b1b2b4" fill-rule="evenodd" d="M0 0h14v9h10v19H0zM16 0l8 7h-8zM4 16v6h5v-6zM13 12v3h6v9h2V12z"/><path fill="none" stroke="#333" stroke-width="2" d="M10 13l-7 7 9 1"/><circle cx="11" cy="22" r="4" fill="none" stroke="#333" stroke-width="2"/></svg>Spanish Steps.00_00_09_02.</div></td><td></td><td></td><td></td></tr>
      <tr><td><div class="chip leaf"></div></td><td><div class="d-flex align-items-center lat" style="padding-left:57px;gap:20px"><svg width="28" height="28"><path fill="#6f9bd1" d="M4 9h8v4H4zM16 9h12v4H16zM0 15h12v4H0zM16 15h6v4h-6z"/><path fill="#2fd09a" d="M4 21h8v4H4zM16 21h12v4H16z"/><path fill="#ddd" d="M11 0h7v5l-3 2v21h-2V7l-2-2z"/></svg>Spanish Steps</div></td><td class="num" style="padding-left:10px">25.00 fps</td><td class="num" style="padding-left:15px">00:00:00:00</td><td></td></tr>
      </tbody></table></div>
    <div class="foot d-flex align-items-center" style="padding-top:22px"><svg width="28" height="30" style="color:#23452a"><path d="M20 1l7 5L12 25 5 20zM4 22l6 4-9 3z"/></svg><svg width="34" height="24" style="margin-left:31px"><path d="M0 1h10v8H0zM0 14h10v9H0zM14 5h18v2H14zM14 19h18v2H14z"/></svg><svg width="22" height="24" style="margin-left:29px"><path d="M1 2h19v15H1zM1 20h19v2H1z"/></svg><svg width="36" height="24" style="margin-left:30px"><path d="M0 2h22v4H6v8H0zM8 7h18v4H14v7H8zM16 10h20v12H16z"/></svg><input class="zoomer" type="range" min="0" max="100" value="0" aria-label="缩放"></div>
  </section>
  <aside class="pane tools d-flex flex-column align-items-center">
    <button class="on" aria-label="选择"><svg width="28" height="36"><path d="M3 1l24 24-14 2L3 35z"/></svg></button>
    <button class="more" aria-label="轨道选择"><svg width="38" height="24"><path class="ln" stroke-width="2" stroke-dasharray="5 3" d="M2 2h18v20H2z"/><path d="M14 9h12V5l10 7-10 7v-4H14z"/></svg></button>
    <button class="more" aria-label="波纹编辑"><svg width="38" height="28"><path d="M17 0h4v28h-4zM0 14l12-7v5h14V7l12 7-12 7v-5H12v5z"/></svg></button>
    <button aria-label="剃刀"><svg width="32" height="32"><path d="M11 1L31 19 20 31 1 12z"/><path stroke="#222325" stroke-width="2" d="M10 10l12 12M9 14l5-5M18 22l5-5"/></svg></button>
    <button class="more" aria-label="外滑"><svg width="40" height="28"><path d="M0 0h4v28H0zM36 0h4v28h-4zM6 14l9-7v6h10V7l9 7-9 7v-6H15v6z"/></svg></button>
    <button class="more" aria-label="钢笔"><svg width="32" height="32"><use href="#pen"/></svg></button>
    <button class="more" aria-label="手形"><svg width="32" height="32"><path class="ln" stroke-width="4" stroke-linecap="round" d="M10 20L7 6M14 17V3M19 17l2-14M23 19l5-11M9 22l-6-6"/><path d="M7 16h18l-2 10q-3 6-8 5-4 0-9-11z"/></svg></button>
    <button class="more" aria-label="文字"><svg width="28" height="28"><path d="M0 0h28v8H0zM11 8h6v18h-6z"/></svg></button>
  </aside>
  <section class="pane f-d">
    <div class="d-flex align-items-center" style="height:58px;padding-left:21px;gap:20px;color:var(--dim)"><svg width="12" height="12" style="color:#c0c1c3"><path class="ln" stroke-width="2" d="M1 1l10 10M11 1L1 11"/></svg><span class="lat">Spanish Steps</span><svg class="burger"><use href="#burger"/></svg></div>
    <div class="d-flex">
      <div class="flex-grow-1">
        <div class="tcode">00:00:01:05</div>
        <div class="d-flex align-items-center ic-dim" style="height:47px;padding:0 0 12px 43px;gap:39px"><svg class="s28"><path d="M12 0h6v5l-2 2v6h-2V7l-2-2zM3 9h8v4H3zM18 9h8v4h-8zM0 15h10v3H0zM5 21h8v4H5zM20 21h8v4h-8zM18 15h6v3h-6z"/><path class="ln" stroke-width="2" d="M3 4l22 22"/></svg><svg width="24" height="26"><path class="ln" stroke-width="6" d="M4 25V12q0-8 8-8t8 8v13"/></svg><svg width="30" height="28"><path d="M0 2h12v10H0zM14 2h14v10L14 5zM14 6l14 14h-7l-7 7zM0 15h11v2H2v6h7v2H0z"/></svg><svg class="s28" viewBox="4 2 32 28"><use href="#mark" width="40" height="32"/></svg><svg class="s28"><use href="#wrench"/></svg></div>
        <div class="track t64 d-flex align-items-center"><span class="src"></span><span class="lock ic-dim"><svg width="18" height="22"><use href="#lockic"/></svg></span><button class="tg on">V2</button><div class="opts hi d-flex align-items-center"><svg width="28" height="20"><use href="#sync"/></svg><svg width="28" height="20" style="margin-left:23px"><use href="#eye"/></svg></div></div>
        <div class="track t64 d-flex align-items-center"><span class="src">V1</span><span class="lock ic-dim"><svg width="18" height="22"><use href="#lockic"/></svg></span><button class="tg on">V1</button><div class="opts hi d-flex align-items-center"><svg width="28" height="20"><use href="#sync"/></svg><svg width="28" height="20" style="margin-left:23px"><use href="#eye"/></svg></div></div>
        <div class="track" style="height:9px"></div>
        <div class="track t48 d-flex align-items-center"><span class="src"></span><span class="lock ic-dim"><svg width="18" height="22"><use href="#lockic"/></svg></span><button class="tg on">A1</button><div class="opts d-flex align-items-center"><svg width="28" height="20" style="margin-right:11px"><use href="#sync"/></svg><button>M</button><button>S</button><svg width="20" height="30" style="margin-left:17px"><use href="#mic"/></svg></div></div>
        <div class="track t48 d-flex align-items-center"><span class="src"></span><span class="lock ic-dim"><svg width="18" height="22"><use href="#lockic"/></svg></span><button class="tg">A2</button><div class="opts d-flex align-items-center"><svg width="28" height="20" style="margin-right:11px"><use href="#sync"/></svg><button>M</button><button>S</button><svg width="20" height="30" style="margin-left:17px"><use href="#mic"/></svg></div></div>
        <div class="track d-flex align-items-center" style="height:45px;font-size:23px"><span class="src"></span><span class="lock ic-dim"><svg width="18" height="22"><use href="#lockic"/></svg></span><span style="padding-left:5px">主声道</span><span class="num" style="margin-left:84px;color:#58595b">0.0</span><svg width="24" height="20" class="ms-auto" style="margin-right:15px;color:#b1b2b4"><path d="M0 0l9 7h2v6H9l-9 7zM24 0l-9 7h-2v6h2l9 7z"/></svg></div>
      </div>
      <div class="position-relative flex-shrink-0" style="width:233px">
        <div class="num" style="height:58px;padding:27px 0 0 3px;line-height:30px">:00:00</div>
        <div style="height:23px;width:188px;background:repeating-linear-gradient(90deg,#4a4b4d 0 2px,transparent 2px 23px) no-repeat left bottom/100% 10px"></div>
        <div style="height:4px;width:188px;background:#f8e81c"></div>
        <div class="lane" style="height:12px;background:none"></div>
        <div class="lane border-0 bg-transparent"><div class="clip white" style="height:62px"><div class="d-flex h-100"><span class="badge-fx yel">fx</span>AdobeStock_27</div></div></div>
        <div class="lane" style="height:66px;padding:2px 72px 0 0;border-bottom:2px solid #2f3032"><div class="clip d-flex rose h-100" style="padding:7px 0 0 18px"><span class="badge-fx">fx</span>Spanis</div></div>
        <div class="track" style="height:8px;margin-right:24px;margin-top:6px"></div>
        <div class="lane" style="height:44px"></div>
        <div class="lane border-0"><div class="clip white" style="height:48px"><div class="d-flex h-100" style="border-bottom:8px solid #3b5068"><span class="badge-fx">fx</span>AdobeStock_27</div></div></div>
        <div class="lane" style="height:43px"></div>
        <svg class="playhead position-absolute" style="left:17px;top:58px" viewBox="0 0 24 28"><path d="M1 0h22v15L12 24 1 15z"/></svg>
        <div class="head-line position-absolute" style="left:28px;top:80px;height:292px"></div>
      </div>
    </div>
  </section>
  <section class="pane meter d-flex align-items-start">
    <div class="bar"><i></i><b></b></div><div class="mtk"></div><div class="mt"><span>0</span><span>-12</span><span>-24</span><span>-36</span><span>-48</span><span>dB</span></div>
  </section>
</div>
</main>
<footer class="status d-flex align-items-center"><svg width="32" height="26"><ellipse class="ln" stroke-width="2" cx="16" cy="13" rx="15" ry="12"/><path class="ln" stroke-width="3" d="M20 19l-8-8q-4-2-6 1-1 4 4 6h6M12 8q4-3 7-1l6 6q2 3-1 5-3 1-5-1l-6-6"/></svg></footer>
<p class="caption position-absolute">要将此按钮添加到面板，单击控件右侧的<span>“+”</span></p>
</body>
</html>
